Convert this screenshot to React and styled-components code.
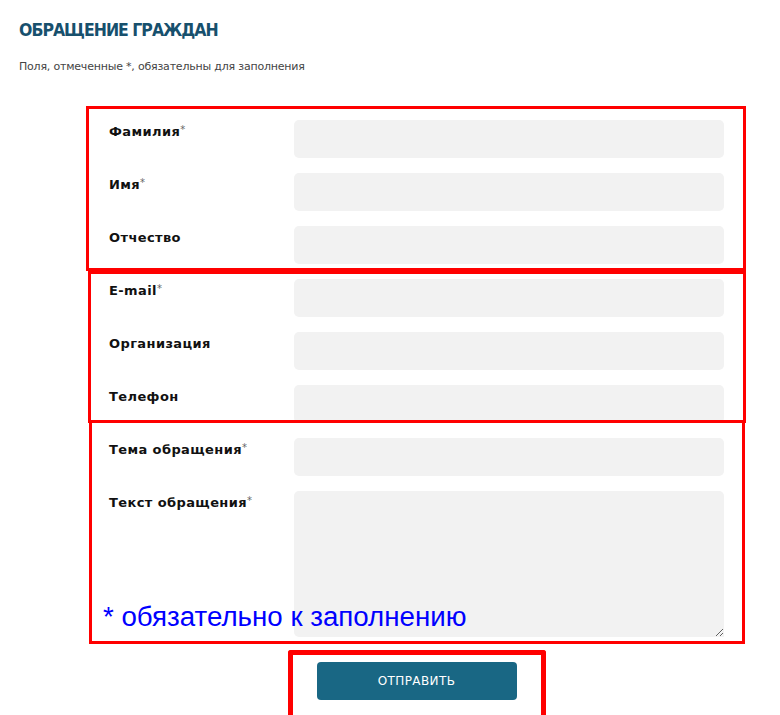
import React from "react";
import styled, { createGlobalStyle } from "styled-components";

const Global = createGlobalStyle`
  html, body { margin: 0; padding: 0; background: #fff; }
  body { font-family: "DejaVu Sans", Verdana, sans-serif; color: #111; }
`;

const Page = styled.div`
  width: 780px;
  min-height: 715px;
  padding: 19px 19px 0 19px;
  box-sizing: border-box;
`;

const Title = styled.h1`
  margin: 0;
  font-family: "DejaVu Sans Condensed", "DejaVu Sans", Verdana, sans-serif;
  font-stretch: condensed;
  font-size: 17.5px;
  line-height: 22px;
  font-weight: bold;
  letter-spacing: -1px;
  color: #17506d;
`;

const Subtitle = styled.p`
  margin: 19px 0 0 0;
  font-family: "DejaVu Sans", Verdana, sans-serif;
  font-size: 11px;
  line-height: 14px;
  letter-spacing: -0.2px;
  color: #444;
`;

const Form = styled.form`
  margin: 46px 0 0 90px;
  width: 615px;
  display: flex;
  flex-direction: column;
  gap: 15px;
`;

const Group = styled.div`
  position: relative;
  display: flex;
  flex-direction: column;
  gap: 15px;
  &::after {
    content: "";
    position: absolute;
    pointer-events: none;
    top: ${(p) => p.$top}px;
    bottom: ${(p) => p.$bottom}px;
    left: ${(p) => p.$left}px;
    right: ${(p) => p.$right}px;
    border: 3px solid #ff0000;
    z-index: 2;
  }
`;

const Row = styled.label`
  display: grid;
  grid-template-columns: 185px 430px;
  align-items: start;
`;

const LabelText = styled.span`
  padding-top: 3px;
  font-family: "DejaVu Sans", Verdana, sans-serif;
  font-weight: bold;
  font-size: 13px;
  line-height: 18px;
  color: #111;
  letter-spacing: 0.4px;
`;

const Star = styled.sup`
  font-size: 10px;
  color: #666;
  font-weight: normal;
  vertical-align: top;
  position: relative;
  top: -2px;
`;

const Input = styled.input`
  display: block;
  box-sizing: border-box;
  width: 430px;
  height: 38px;
  border: none;
  border-radius: 5px;
  background: #f2f2f2;
  outline: none;
  padding: 0 10px;
`;

const TextArea = styled.textarea`
  display: block;
  box-sizing: border-box;
  width: 430px;
  height: 146px;
  border: none;
  border-radius: 5px 5px 0 5px;
  background: #f2f2f2;
  outline: none;
  padding: 8px 10px;
  resize: both;
`;

const Note = styled.div`
  position: absolute;
  left: -6px;
  bottom: 4px;
  z-index: 3;
  font-family: "Liberation Sans", Arial, sans-serif;
  font-size: 27.7px;
  line-height: 32px;
  color: #0000ff;
  white-space: nowrap;
`;

const ButtonBar = styled.div`
  display: flex;
  justify-content: center;
  margin-top: 10px;
`;

const ButtonFrame = styled.div`
  position: relative;
  &::after {
    content: "";
    position: absolute;
    pointer-events: none;
    top: -12px;
    bottom: -15px;
    left: -29px;
    right: -29px;
    border: 5px solid #ff0000;
    border-bottom: none;
    border-radius: 3px 3px 0 0;
  }
`;

const SubmitButton = styled.button`
  display: block;
  width: 200px;
  height: 38px;
  border: none;
  border-radius: 4px;
  background: #196784;
  color: #fff;
  font-family: "DejaVu Sans", Verdana, sans-serif;
  font-size: 12px;
  letter-spacing: 0.4px;
  cursor: pointer;
`;

const Field = ({ label, required, children }) => (
  <Row>
    <LabelText>
      {label}
      {required && <Star>*</Star>}
    </LabelText>
    {children}
  </Row>
);

export default function App() {
  return (
    <>
      <Global />
      <Page>
        <Title>ОБРАЩЕНИЕ ГРАЖДАН</Title>
        <Subtitle>Поля, отмеченные *, обязательны для заполнения</Subtitle>
        <Form onSubmit={(e) => e.preventDefault()}>
          <Group $top={-14} $bottom={-7} $left={-23} $right={-22}>
            <Field label="Фамилия" required><Input /></Field>
            <Field label="Имя" required><Input /></Field>
            <Field label="Отчество"><Input /></Field>
          </Group>
          <Group $top={-8} $bottom={0} $left={-21} $right={-22}>
            <Field label="E-mail" required><Input type="email" /></Field>
            <Field label="Организация"><Input /></Field>
            <Field label="Телефон"><Input /></Field>
          </Group>
          <Group $top={-18} $bottom={-7} $left={-20} $right={-21}>
            <Field label="Тема обращения" required><Input /></Field>
            <Field label="Текст обращения" required><TextArea /></Field>
            <Note>* обязательно к заполнению</Note>
          </Group>
          <ButtonBar>
            <ButtonFrame>
              <SubmitButton type="submit">ОТПРАВИТЬ</SubmitButton>
            </ButtonFrame>
          </ButtonBar>
        </Form>
      </Page>
    </>
  );
}
